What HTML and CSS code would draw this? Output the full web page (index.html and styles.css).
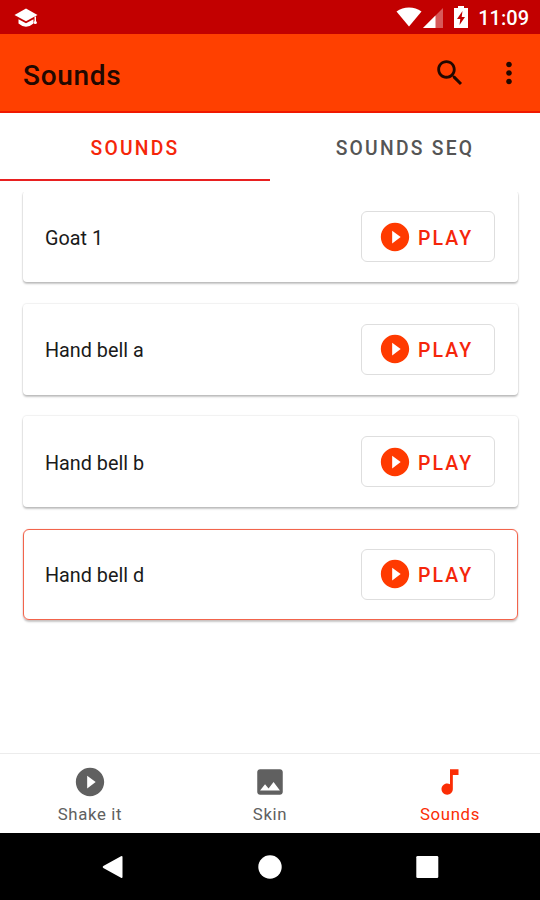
FILE: index.html
```
<!DOCTYPE html>
<html lang="en">
<head>
<meta charset="utf-8">
<title>Sounds</title>
<link rel="stylesheet" href="styles.css">
</head>
<body>
<svg class="defs" aria-hidden="true">
  <symbol id="play" viewBox="0 0 24 24"><path d="M12 2C6.48 2 2 6.48 2 12s4.480 10 10 10 10-4.480 10-10S17.520 2 12 2zm-2 14.500v-9l6 4.500-6 4.500z"/></symbol>
</svg>
<div class="screen">
  <div class="status">
    <svg class="cap" viewBox="0 0 24 20"><path d="M12 .5L.5 7 12 13.300 23.500 7z"/><path d="M4.500 11.300v4.200Q12 22 19.500 15.500v-4.200L12 15.300z"/><path d="M20.500 8.500H22v6h-1.500z"/><circle cx="21.300" cy="14.500" r="1.600"/></svg>
    <div class="status-right">
      <svg class="wifi" viewBox="0 0 26 20"><path d="M13 19.500L.5 4.500Q6 .5 13 .5t12.500 4z"/></svg>
      <svg class="signal" viewBox="0 0 20 20"><path d="M20 0v20H0z" opacity=".35"/><path d="M12.500 7.500V20H0z"/></svg>
      <svg class="battery" viewBox="0 0 14 22"><path d="M4 0h6v2h4v20H0V2h4z"/><path class="bolt" d="M8.500 5L3 13h3.300L5.500 19 11 11H7.700z"/></svg>
      <span class="time">11:09</span>
    </div>
  </div>
  <header class="appbar">
    <h1>Sounds</h1>
    <svg class="icon search" viewBox="0 0 24 24"><path d="M15.500 14h-.79l-.28-.27C15.410 12.590 16 11.110 16 9.500 16 5.910 13.090 3 9.500 3S3 5.910 3 9.500 5.910 16 9.500 16c1.610 0 3.090-.59 4.230-1.570l.27.28v.79l5 4.990L20.490 19l-4.990-5zm-6 0C7.010 14 5 11.990 5 9.500S7.010 5 9.500 5 14 7.010 14 9.500 11.990 14 9.500 14z"/></svg>
    <svg class="icon" viewBox="0 0 24 24"><path d="M12 8c1.100 0 2-.9 2-2s-.9-2-2-2-2 .9-2 2 .9 2 2 2zm0 2c-1.100 0-2 .9-2 2s.9 2 2 2 2-.9 2-2-.9-2-2-2zm0 6c-1.100 0-2 .9-2 2s.9 2 2 2 2-.9 2-2-.9-2-2-2z"/></svg>
  </header>
  <nav class="tabs">
    <div class="tab active">SOUNDS</div>
    <div class="tab">SOUNDS SEQ</div>
  </nav>
  <main class="list">
    <div class="card"><span class="name">Goat 1</span><button class="btn"><svg class="icon"><use href="#play"/></svg><span>PLAY</span></button></div>
    <div class="card"><span class="name">Hand bell a</span><button class="btn"><svg class="icon"><use href="#play"/></svg><span>PLAY</span></button></div>
    <div class="card"><span class="name">Hand bell b</span><button class="btn"><svg class="icon"><use href="#play"/></svg><span>PLAY</span></button></div>
    <div class="card selected"><span class="name">Hand bell d</span><button class="btn"><svg class="icon"><use href="#play"/></svg><span>PLAY</span></button></div>
  </main>
  <nav class="bottom">
    <div class="item"><svg class="icon"><use href="#play"/></svg><span>Shake it</span></div>
    <div class="item"><svg class="icon" viewBox="0 0 24 24"><path d="M21 19V5c0-1.100-.9-2-2-2H5c-1.100 0-2 .9-2 2v14c0 1.100.9 2 2 2h14c1.100 0 2-.9 2-2zM8.500 13.500l2.500 3.010L14.500 12l4.500 6H5l3.500-4.500z"/></svg><span>Skin</span></div>
    <div class="item active"><svg class="icon" viewBox="0 0 24 24"><path d="M12 3v10.550c-.59-.34-1.270-.55-2-.55-2.210 0-4 1.790-4 4s1.790 4 4 4 4-1.790 4-4V7h4V3h-6z"/></svg><span>Sounds</span></div>
  </nav>
  <div class="system">
    <svg viewBox="0 0 24 24"><path d="M21.500 2v20q0 1.500-1.500.8L2.300 13q-1.300-1 0-2L20 1.200q1.500-.7 1.500.8z"/></svg>
    <svg viewBox="0 0 24 24"><circle cx="12" cy="12" r="11.700"/></svg>
    <svg viewBox="0 0 24 24"><rect x="1.300" y="1" width="22" height="22" rx="1.300"/></svg>
  </div>
</div>
</body>
</html>
```
FILE: styles.css
```
* { box-sizing: border-box; }
body { margin: 0; background: #fff; font-family: Roboto, sans-serif; }
svg { display: block; flex: none; fill: currentColor; }
.defs { display: none; }
.icon { width: 34px; height: 34px; }
.screen { width: 540px; height: 900px; display: flex; flex-direction: column; overflow: hidden; }

.status { height: 34px; flex: none; background: #c20000; color: #fff; display: flex; justify-content: space-between; padding: 0 11px 0 14px; }
.cap { width: 24px; height: 20px; margin-top: 8px; }
.status-right { display: flex; align-items: flex-start; }
.wifi { width: 26px; height: 20px; margin-top: 7px; }
.signal { width: 20px; height: 20px; margin: 8px 11px 0 1px; }
.battery { width: 14px; height: 22px; margin: 6px 10px 0 0; }
.bolt { fill: #c20000; }
.time { font-size: 20px; line-height: 37px; font-weight: 500; }

.appbar { height: 79px; flex: none; background: #ff4000; border-bottom: 2px solid #f01800; color: #210800; display: flex; align-items: center; padding: 0 14px 0 23px; }
.appbar h1 { margin: 6px auto 0 0; font-size: 28px; line-height: 36px; font-weight: 500; letter-spacing: .7px; }
.search { margin-right: 25px; }

.tabs { height: 68px; flex: none; display: flex; }
.tab { flex: 1; height: 68px; text-align: center; font-size: 19.300px; line-height: 72px; font-weight: 500; letter-spacing: 2.250px; color: #555; }
.tab.active { color: #f5260a; border-bottom: 2px solid #e82020; height: 68px; }

.list { flex: 1; min-height: 0; margin-top: 11px; padding: 0 22px 0 23px; overflow: hidden; display: flex; flex-direction: column; gap: 21.500px; }
.card { height: 91px; flex: none; display: flex; align-items: center; justify-content: space-between; padding: 0 23px 0 22px; border-radius: 4px; box-shadow: 0 0 1px 1px #0000000f, 0 2px 2px #00000038; }
.card:first-child { margin-top: -1px; }
.card.selected { border: 1px solid #f2644c; padding: 0 22px 0 21px; border-radius: 6px; box-shadow: 0 0 1px #f2644c99, 0 2px 2px #00000038; }
.name { font-size: 19.800px; line-height: 26px; margin-top: 4px; color: #1a1a1a; }
.btn { width: 134px; height: 51px; border: 1px solid #dedede; border-radius: 6px; background: #fff; padding: 0 0 0 15.500px; display: flex; align-items: center; gap: 6.500px; color: #ff3a00; font: 500 19.500px Roboto, sans-serif; letter-spacing: 2.100px; }
.btn span { color: #f5260a; margin-top: 3px; }

.bottom { height: 80px; flex: none; border-top: 1px solid #ececec; display: flex; }
.item { flex: 1; display: flex; flex-direction: column; align-items: center; padding-top: 11px; color: #606060; }
.item span { font-size: 16.800px; line-height: 22px; margin-top: 4px; letter-spacing: .65px; }
.item.active { color: #fb2d05; }

.system { height: 67px; flex: none; background: #000; color: #fff; display: flex; align-items: center; justify-content: center; gap: 133px; }
.system svg { width: 24px; height: 24px; }
```
